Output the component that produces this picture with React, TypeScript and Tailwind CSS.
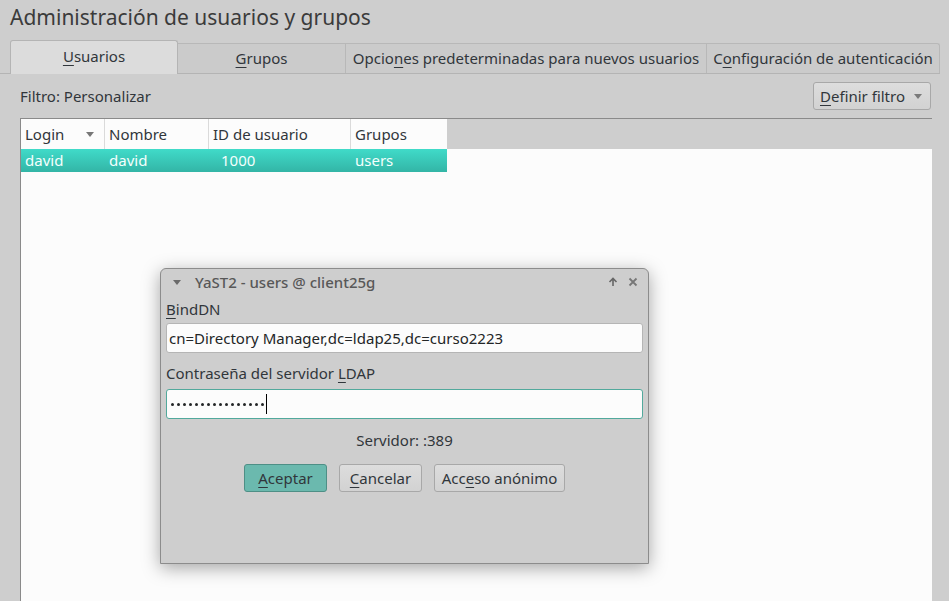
import React from "react";

const U = ({ children }: { children: React.ReactNode }) => (
  <span className="underline decoration-1 underline-offset-[3px]">{children}</span>
);

export default function App() {
  return (
    <div
      className="relative w-[949px] h-[601px] overflow-hidden bg-[#cecece] text-[#31363b] text-[15px]"
      style={{ fontFamily: '"Noto Sans", "Open Sans", sans-serif' }}
    >
      {/* Title */}
      <div className="pl-[10px] pt-[2px] h-[40px] text-[21px] leading-[30px] text-[#3b3b3b]">
        Administración de usuarios y grupos
      </div>

      {/* Tabs */}
      <div className="flex items-end pl-[10px] h-[34px] border-b border-[#b4b4b4] w-[940px]">
        <div className="w-[168px] h-[34px] -mb-px bg-[#dcdcdc] border border-b-0 border-[#b4b4b4] rounded-t-[3px] flex items-center justify-center pb-[2px]">
          <span><U>U</U>suarios</span>
        </div>
        <div className="w-[168px] h-[30px] bg-[#cbcbcb] border-t border-r border-[#b8b8b8] flex items-center justify-center">
          <span><U>G</U>rupos</span>
        </div>
        <div className="w-[361px] h-[30px] bg-[#cbcbcb] border-t border-r border-[#b8b8b8] flex items-center justify-center">
          <span>Opcio<U>n</U>es predeterminadas para nuevos usuarios</span>
        </div>
        <div className="w-[233px] h-[30px] bg-[#cbcbcb] border-t border-r border-[#b8b8b8] rounded-tr-[3px] flex items-center justify-center">
          <span>C<U>o</U>nfiguración de autenticación</span>
        </div>
      </div>

      {/* Filter row */}
      <div className="flex items-center justify-between pl-[20px] pr-[18px] h-[44px]">
        <span>Filtro: Personalizar</span>
        <div className="w-[118px] h-[28px] flex items-center justify-between pl-[6px] pr-[8px] rounded-[3px] border border-[#a8a8a8] bg-gradient-to-b from-[#dddddd] to-[#d2d2d2]">
          <span><U>D</U>efinir filtro</span>
          <svg width="8" height="5" viewBox="0 0 8 5"><path d="M0 0h8L4 5z" fill="#7a7a7a" /></svg>
        </div>
      </div>

      {/* Table */}
      <div className="ml-[20px] w-[912px] h-[500px] border-t-[1.5px] border-l border-[#8a8a8a] bg-[#fcfcfc]">
        <div className="flex h-[30px] bg-[#cecece]">
          <div className="w-[84px] bg-[#fcfcfc] border-r border-[#dadada] flex items-center justify-between pl-[4px] pr-[10px]">
            <span>Login</span>
            <svg width="8" height="5" viewBox="0 0 8 5"><path d="M0 0h8L4 5z" fill="#777" /></svg>
          </div>
          <div className="w-[104px] bg-[#fcfcfc] border-r border-[#dadada] flex items-center pl-[4px]">Nombre</div>
          <div className="w-[142px] bg-[#fcfcfc] border-r border-[#dadada] flex items-center pl-[4px]">ID de usuario</div>
          <div className="w-[96px] bg-[#fcfcfc] flex items-center pl-[4px]">Grupos</div>
        </div>
        <div className="flex h-[23px] w-[426px] bg-gradient-to-b from-[#40dbc9] to-[#33b5a6] text-[#f4fffd]">
          <div className="w-[84px] pl-[4px] flex items-center">david</div>
          <div className="w-[104px] pl-[4px] flex items-center">david</div>
          <div className="w-[142px] pl-[12px] flex items-center">1000</div>
          <div className="w-[96px] pl-[4px] flex items-center">users</div>
        </div>
      </div>

      {/* Dialog */}
      <div className="absolute left-[160px] top-[268px] w-[489px] h-[296px] bg-[#cecece] border border-[#8c8c8c] rounded-t-[6px] shadow-[0_4px_18px_rgba(0,0,0,0.35)]">
        <div className="flex items-center h-[26px] pl-[12px] pr-[10px] text-[#585858]">
          <svg width="8" height="5" viewBox="0 0 8 5"><path d="M0 0h8L4 5z" fill="#6a6a6a" /></svg>
          <span className="ml-[14px] font-medium">YaST2 - users @ client25g</span>
          <div className="flex-1" />
          <svg width="10" height="10" viewBox="0 0 10 10" className="mr-[10px]">
            <path d="M5 9V2M1.5 5L5 1.5L8.5 5" stroke="#666" strokeWidth="1.6" fill="none" />
          </svg>
          <svg width="10" height="10" viewBox="0 0 10 10">
            <path d="M1.5 1.5L8.5 8.5M8.5 1.5L1.5 8.5" stroke="#777" strokeWidth="1.8" fill="none" />
          </svg>
        </div>
        <div className="px-[5px]">
          <div className="h-[28px] flex items-center"><span><U>B</U>indDN</span></div>
          <div className="h-[30px] bg-[#fcfcfc] border border-[#b5b5b5] rounded-[3px] flex items-center pl-[2px] text-[#232627]">
            cn=Directory Manager,dc=ldap25,dc=curso2223
          </div>
          <div className="h-[36px] flex items-center pt-[5px]"><span>Contraseña del servidor <U>L</U>DAP</span></div>
          <div className="h-[30px] bg-[#fcfcfc] border border-[#52a99c] rounded-[3px] flex items-center pl-[4px]">
            <div className="flex gap-[3px]">
              {Array.from({ length: 16 }).map((_, i) => (
                <span key={i} className="block w-[3px] h-[3px] rounded-full bg-[#232627]" />
              ))}
            </div>
            <span className="ml-[2px] w-px h-[20px] bg-black" />
          </div>
          <div className="h-[41px] flex items-center justify-center pt-[1px]">Servidor: :389</div>
          <div className="flex justify-center gap-[12px] pt-[4px]">
            <div className="w-[83px] h-[28px] rounded-[3px] border border-[#4e8f86] bg-[#6bb9ae] flex items-center justify-center">
              <span><U>A</U>ceptar</span>
            </div>
            <div className="w-[83px] h-[28px] rounded-[3px] border border-[#a8a8a8] bg-gradient-to-b from-[#dddddd] to-[#d2d2d2] flex items-center justify-center">
              <span><U>C</U>ancelar</span>
            </div>
            <div className="w-[131px] h-[28px] rounded-[3px] border border-[#a8a8a8] bg-gradient-to-b from-[#dddddd] to-[#d2d2d2] flex items-center justify-center">
              <span>Acc<U>e</U>so anónimo</span>
            </div>
          </div>
        </div>
      </div>
    </div>
  );
}
